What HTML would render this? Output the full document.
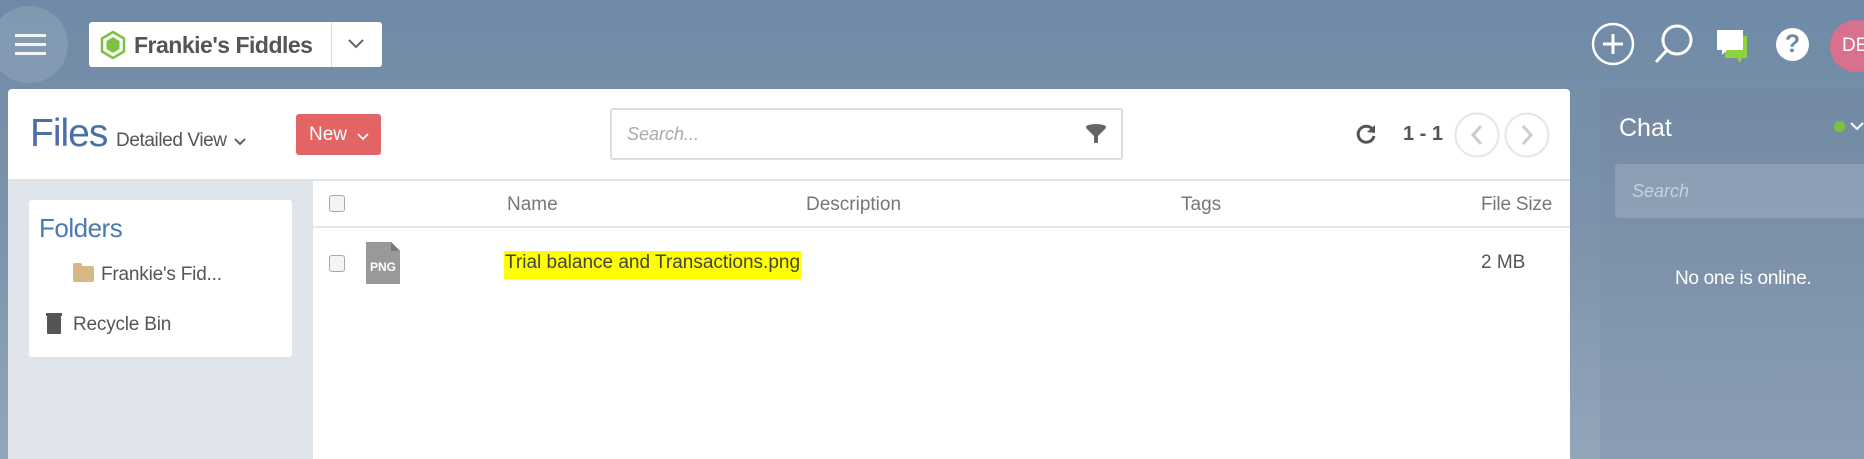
<!DOCTYPE html>
<html><head><meta charset="utf-8"><style>
*{margin:0;padding:0;box-sizing:border-box}
html,body{width:1864px;height:459px;overflow:hidden}
body{position:relative;font-family:"Liberation Sans",sans-serif;background:linear-gradient(180deg,#6f8aa7 0%,#7d93ab 50%,#93a5b9 100%)}
.a{position:absolute}
.t{position:absolute;white-space:nowrap}
</style></head><body>
<div class="a" style="left:-10px;top:6px;width:78px;height:77px;border-radius:50%;background:rgba(255,255,255,0.12)"></div>
<div class="a" style="left:15px;top:34px;width:31px;height:3px;background:#fff;box-shadow:0 9px 0 #fff,0 18px 0 #fff;opacity:.9"></div>
<div class="a" style="left:89px;top:22px;width:293px;height:45px;background:#fff;border-radius:3px"></div>
<div class="a" style="left:331px;top:22px;width:1px;height:45px;background:#ddd"></div>
<svg class="a" style="left:99px;top:30px" width="28" height="30" viewBox="0 0 28 30"><polygon points="14,2 25,8.5 25,21.5 14,28 3,21.5 3,8.5" fill="none" stroke="#7cc242" stroke-width="2.5"/><polygon points="14,7 20.5,11 20.5,19 14,23 7.5,19 7.5,11" fill="#7cc242"/></svg>
<div class="t" style="left:134px;top:32px;font-size:23px;font-weight:bold;color:#555;letter-spacing:-0.5px">Frankie's Fiddles</div>
<svg class="a" style="left:347px;top:38px" width="18" height="12"><polyline points="2,2 9,9 16,2" fill="none" stroke="#666" stroke-width="2"/></svg>

<svg class="a" style="left:1591px;top:22px" width="44" height="44"><circle cx="22" cy="22" r="20" fill="none" stroke="#fff" stroke-width="2.5"/><path d="M22 12v20M12 22h20" stroke="#fff" stroke-width="3"/></svg>
<svg class="a" style="left:1652px;top:22px" width="42" height="44"><circle cx="25" cy="18" r="14" fill="none" stroke="#fff" stroke-width="3"/><path d="M15 28L4 40" stroke="#fff" stroke-width="3"/></svg>
<svg class="a" style="left:1715px;top:28px" width="34" height="36"><path d="M10 8h22v22h-5l-2 5-3-5H10z" fill="#8cd43a"/><path d="M2 2h26v20H12l-5 5v-5H2z" fill="#fff"/></svg>
<div class="a" style="left:1776px;top:28px;width:33px;height:33px;border-radius:50%;background:#fff;color:#6f8aa7;font-size:25px;font-weight:bold;text-align:center;line-height:33px">?</div>
<div class="a" style="left:1830px;top:20px;width:52px;height:52px;border-radius:50%;background:#d9708e;color:#fff;font-size:19px;line-height:52px;padding-left:12px">DE</div>

<div class="a" style="left:8px;top:89px;width:1562px;height:370px;background:#fff;border-radius:4px 4px 0 0"></div>
<div class="t" style="left:30px;top:112px;font-size:39px;font-weight:300;color:#4a70a4;letter-spacing:-1px">Files</div>
<div class="t" style="left:116px;top:130px;font-size:19px;color:#555;letter-spacing:-0.4px">Detailed View</div>
<svg class="a" style="left:233px;top:137px" width="14" height="10"><polyline points="2,2 7,7 12,2" fill="none" stroke="#555" stroke-width="1.8"/></svg>
<div class="a" style="left:296px;top:114px;width:85px;height:41px;background:#e36464;border-radius:3px"></div>
<div class="t" style="left:309px;top:124px;font-size:19px;color:#fff">New</div>
<svg class="a" style="left:357px;top:132px" width="12" height="9"><polyline points="1,2 6,7 11,2" fill="none" stroke="#fff" stroke-width="1.8"/></svg>
<div class="a" style="left:610px;top:108px;width:513px;height:52px;border:2px solid #ddd;border-radius:3px"></div>
<div class="t" style="left:627px;top:124px;font-size:18px;font-style:italic;color:#aaa">Search...</div>
<svg class="a" style="left:1084px;top:123px" width="24" height="22"><ellipse cx="12" cy="4" rx="10" ry="3" fill="#666"/><path d="M2 5L10 13V20H14V13L22 5z" fill="#666"/></svg>
<svg class="a" style="left:1354px;top:122px" width="24" height="24"><path d="M19 8A8 8 0 1 0 20 14" fill="none" stroke="#555" stroke-width="3"/><polygon points="21,3 21,11 13,10" fill="#555"/></svg>
<div class="t" style="left:1403px;top:123px;font-size:20px;font-weight:bold;color:#555">1 - 1</div>
<svg class="a" style="left:1454px;top:111px" width="98" height="48"><circle cx="23" cy="24" r="21.5" fill="none" stroke="#e6e6e6" stroke-width="2"/><circle cx="73" cy="24" r="21.5" fill="none" stroke="#e6e6e6" stroke-width="2"/><polyline points="27,15 19,24 27,33" fill="none" stroke="#ccc" stroke-width="3"/><polyline points="69,15 77,24 69,33" fill="none" stroke="#ccc" stroke-width="3"/></svg>
<div class="a" style="left:8px;top:179px;width:1562px;height:2px;background:#e4e4e4"></div>

<div class="a" style="left:8px;top:181px;width:305px;height:278px;background:#e0e5eb"></div>
<div class="a" style="left:29px;top:200px;width:263px;height:157px;background:#fff;border-radius:3px"></div>
<div class="t" style="left:39px;top:213px;font-size:26px;color:#4a7ab0;letter-spacing:-0.5px">Folders</div>
<div class="a" style="left:73px;top:266px;width:21px;height:16px;background:#d9b784;border-radius:2px"></div>
<div class="a" style="left:73px;top:263px;width:9px;height:5px;background:#d9b784;border-radius:2px 2px 0 0"></div>
<div class="t" style="left:101px;top:264px;font-size:19px;color:#555;letter-spacing:-0.2px">Frankie's Fid...</div>
<div class="a" style="left:47px;top:316px;width:14px;height:18px;background:#555;border-radius:1px"></div>
<div class="a" style="left:46px;top:313px;width:16px;height:3px;background:#555"></div>
<div class="t" style="left:73px;top:314px;font-size:19px;color:#555;letter-spacing:-0.2px">Recycle Bin</div>

<div class="a" style="left:329px;top:195px;width:16px;height:17px;border:1.5px solid #aaa;border-radius:3px;background:#f4f4f4"></div>
<div class="t" style="left:507px;top:194px;font-size:19px;color:#777">Name</div>
<div class="t" style="left:806px;top:194px;font-size:19px;color:#777">Description</div>
<div class="t" style="left:1181px;top:194px;font-size:19px;color:#777">Tags</div>
<div class="t" style="left:1481px;top:194px;font-size:19px;color:#777;letter-spacing:-0.2px">File Size</div>
<div class="a" style="left:313px;top:226px;width:1257px;height:2px;background:#e6e6e6"></div>
<div class="a" style="left:329px;top:255px;width:16px;height:17px;border:1.5px solid #aaa;border-radius:3px;background:#f4f4f4"></div>
<svg class="a" style="left:366px;top:242px" width="34" height="42"><path d="M0 0H25L34 9V42H0z" fill="#999"/><path d="M25 0V9H34z" fill="#777"/><text x="17" y="29" font-family="Liberation Sans" font-size="12" font-weight="bold" fill="#fff" text-anchor="middle">PNG</text></svg>
<div class="a" style="left:504px;top:251px;width:297px;height:28px;background:#ffff00;overflow:hidden">
<div class="t" style="left:1px;top:1px;font-size:19px;color:#444;letter-spacing:0px">Trial balance and Transactions.png</div></div>
<div class="t" style="left:1481px;top:252px;font-size:19px;color:#555">2 MB</div>

<div class="a" style="left:1600px;top:89px;width:270px;height:370px;background:linear-gradient(180deg,#7389a3,#8a9db2);border-radius:4px 0 0 0"></div>
<div class="t" style="left:1619px;top:114px;font-size:25px;color:#fff">Chat</div>
<div class="a" style="left:1834px;top:121px;width:11px;height:11px;border-radius:50%;background:#7cc242"></div>
<svg class="a" style="left:1850px;top:121px" width="14" height="10"><polyline points="1,2 7,8 13,2" fill="none" stroke="#fff" stroke-width="2"/></svg>
<div class="a" style="left:1615px;top:164px;width:260px;height:54px;background:rgba(255,255,255,0.15);border-radius:3px"></div>
<div class="t" style="left:1632px;top:181px;font-size:18px;font-style:italic;color:#c8d1dc">Search</div>
<div class="t" style="left:1675px;top:268px;font-size:19px;color:#fff;letter-spacing:-0.3px">No one is online.</div>
</body></html>
